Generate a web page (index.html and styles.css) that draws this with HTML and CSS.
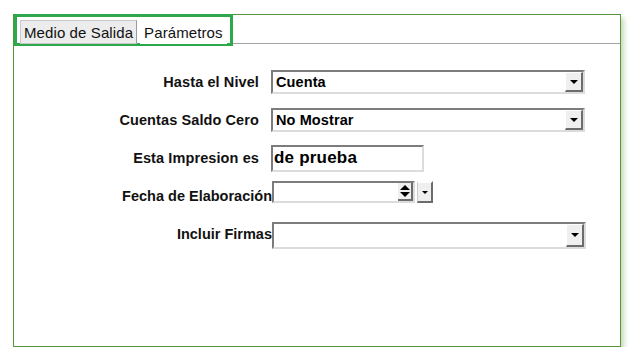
FILE: index.html
```html
<!DOCTYPE html>
<html lang="es">
  <head>
    <meta charset="UTF-8" />
    <title>Parámetros de impresión</title>
    <link rel="stylesheet" href="styles.css">
  </head>
  <body>
    <div class="frame">
      <div class="tabbar">
        <div class="tabs">
          <div class="tab">Medio de Salida</div>
          <div class="tab active">Parámetros</div>
        </div>
      </div>

      <div class="form">
        <label class="lbl">Hasta el Nivel</label>
        <div class="combo wide">
          <span class="value">Cuenta</span>
          <span class="drop"><i></i></span>
        </div>

        <label class="lbl">Cuentas Saldo Cero</label>
        <div class="combo wide">
          <span class="value">No Mostrar</span>
          <span class="drop"><i></i></span>
        </div>

        <label class="lbl">Esta Impresion es</label>
        <div class="textbox">de prueba</div>

        <label class="lbl tight">Fecha de Elaboración</label>
        <div class="datebox">
          <div class="date-input">
            <span class="value"></span>
            <span class="spin"><i class="up"></i><i></i></span>
          </div>
          <span class="drop small"><i></i></span>
        </div>

        <label class="lbl tight">Incluir Firmas</label>
        <div class="combo wide tall">
          <span class="value"></span>
          <span class="drop"><i></i></span>
        </div>
      </div>
    </div>
  </body>
</html>
```

FILE: styles.css
```css
html,
body {
  margin: 0;
  padding: 0;
  background: #fff;
  font-family: "Liberation Sans", Arial, sans-serif;
  color: #000;
}

.frame {
  box-sizing: border-box;
  margin: 14px 0 0 13px;
  width: 608px;
  height: 333px;
  border: 1px solid #5a933e;
  background: #fff;
  box-shadow: 3px 4px 5px rgba(110, 160, 80, 0.4);
}

/* tabs */
.tabbar {
  height: 28px;
  border-bottom: 1px solid #a4a4a4;
}

.tabs {
  box-sizing: border-box;
  display: inline-flex;
  gap: 3px;
  height: 32px;
  padding: 3px 3px 0 3px;
  border: 3px solid #2da84a;
  margin-top: -1px;
}

.tab {
  box-sizing: border-box;
  height: 24px;
  padding: 0 3px;
  line-height: 24px;
  font-size: 15px;
  letter-spacing: 0.1px;
  background: #ececec;
  border: 1px solid #c8c8c8;
  border-right-color: #9a9a9a;
  color: #111;
}

.tab.active {
  background: #fff;
  border-color: #fff;
}

/* form */
.form {
  display: grid;
  grid-template-columns: 257px 1fr;
  grid-auto-rows: 38px;
  align-items: center;
  padding-top: 19px;
}

.lbl {
  text-align: right;
  padding-right: 12px;
  font-size: 14.5px;
  font-weight: bold;
  letter-spacing: 0.1px;
  white-space: nowrap;
  color: #111;
}

.lbl.tight {
  padding-right: 0;
  margin-right: -1px;
  letter-spacing: 0;
}

.combo {
  box-sizing: border-box;
  display: flex;
  height: 24px;
  border: 2px solid #7c7c7c;
  border-right-color: #dcdcdc;
  border-bottom-color: #dcdcdc;
  background: #fff;
}

.combo.wide {
  width: 314px;
}

.combo.tall {
  height: 27px;
  margin-left: 1px;
  margin-top: 2px;
}

.value {
  flex: 1;
  padding-left: 3px;
  font-size: 14.5px;
  font-weight: bold;
  line-height: 20px;
  letter-spacing: 0.1px;
}

.drop {
  box-sizing: border-box;
  display: flex;
  align-items: center;
  justify-content: center;
  width: 18px;
  background: #efefef;
  border-top: 1px solid #fff;
  border-left: 1px solid #fff;
  border-right: 2px solid #6c6c6c;
  border-bottom: 2px solid #6c6c6c;
}

.drop i {
  width: 0;
  height: 0;
  border-left: 4px solid transparent;
  border-right: 4px solid transparent;
  border-top: 4px solid #000;
}

.textbox {
  box-sizing: border-box;
  width: 153px;
  height: 27px;
  padding-left: 1px;
  border: 2px solid #7c7c7c;
  border-right-color: #dcdcdc;
  border-bottom-color: #dcdcdc;
  font-size: 17px;
  font-weight: bold;
  line-height: 21px;
  letter-spacing: 0.2px;
}

.datebox {
  display: flex;
  gap: 2px;
  height: 22px;
  margin-left: 1px;
  margin-top: -8px;
}

.date-input {
  box-sizing: border-box;
  display: flex;
  width: 143px;
  border: 2px solid #7c7c7c;
  border-right-color: #dcdcdc;
  border-bottom-color: #dcdcdc;
}

.spin {
  box-sizing: border-box;
  display: flex;
  flex-direction: column;
  align-items: center;
  justify-content: center;
  gap: 2px;
  width: 15px;
  background: #efefef;
  border-right: 2px solid #6c6c6c;
  border-bottom: 2px solid #6c6c6c;
}

.spin i {
  width: 0;
  height: 0;
  border-left: 5px solid transparent;
  border-right: 5px solid transparent;
  border-top: 5px solid #000;
}

.spin i.up {
  border-top: 0;
  border-bottom: 5px solid #000;
}

.drop.small {
  width: 16px;
  border: 2px solid #6c6c6c;
  border-top-color: #fff;
  border-left: 1px solid #ccc;
}

.drop.small i {
  border-left-width: 3px;
  border-right-width: 3px;
  border-top-width: 3px;
}
```
